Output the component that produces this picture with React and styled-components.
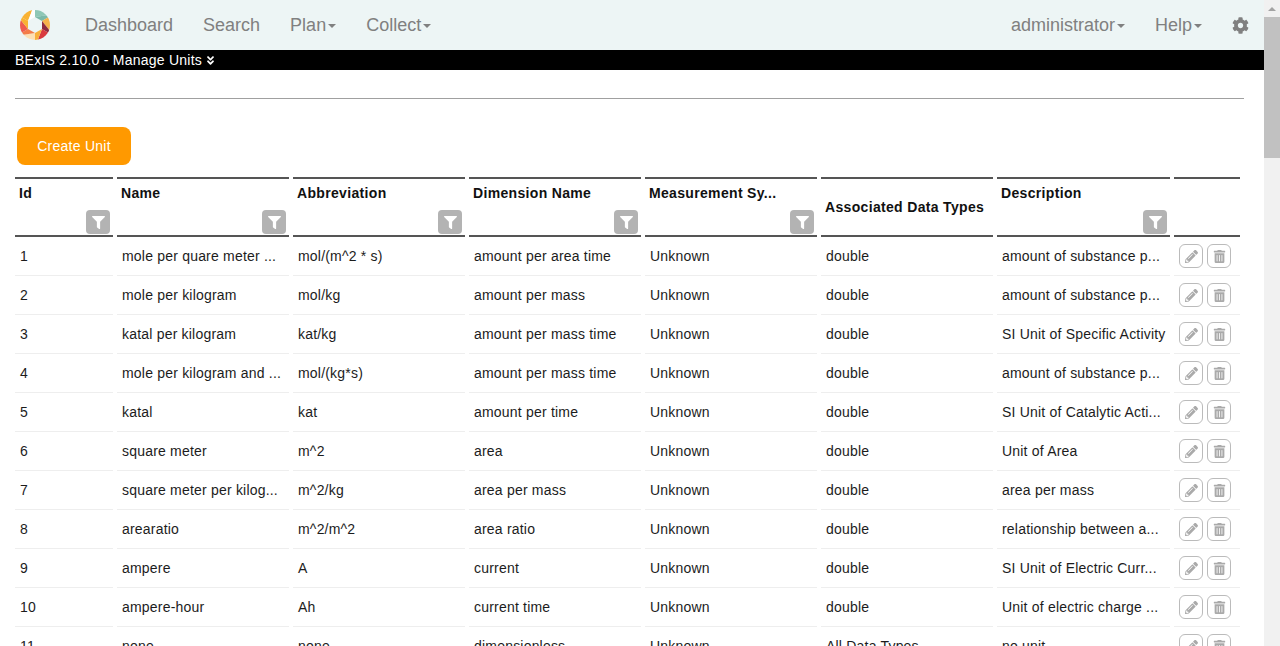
import React from "react";
import styled, { createGlobalStyle } from "styled-components";
import { FaAngleDoubleDown, FaCog, FaFilter, FaPencilAlt, FaTrashAlt } from "react-icons/fa";

const GlobalStyle = createGlobalStyle`
  body {
    margin: 0;
    background: #fff;
    font-family: "Liberation Sans", Arial, sans-serif;
    font-size: 14px;
    color: #222;
  }
`;

const COLUMNS = [
  { title: "Id", width: 98, filter: true },
  { title: "Name", width: 172, filter: true },
  { title: "Abbreviation", width: 172, filter: true },
  { title: "Dimension Name", width: 172, filter: true },
  { title: "Measurement Sy...", width: 172, filter: true },
  { title: "Associated Data Types", width: 172 },
  { title: "Description", width: 173, filter: true },
  { title: "", width: 66 },
];

const UNITS = [
  ["1", "mole per quare meter ...", "mol/(m^2 * s)", "amount per area time", "Unknown", "double", "amount of substance p..."],
  ["2", "mole per kilogram", "mol/kg", "amount per mass", "Unknown", "double", "amount of substance p..."],
  ["3", "katal per kilogram", "kat/kg", "amount per mass time", "Unknown", "double", "SI Unit of Specific Activity"],
  ["4", "mole per kilogram and ...", "mol/(kg*s)", "amount per mass time", "Unknown", "double", "amount of substance p..."],
  ["5", "katal", "kat", "amount per time", "Unknown", "double", "SI Unit of Catalytic Acti..."],
  ["6", "square meter", "m^2", "area", "Unknown", "double", "Unit of Area"],
  ["7", "square meter per kilog...", "m^2/kg", "area per mass", "Unknown", "double", "area per mass"],
  ["8", "arearatio", "m^2/m^2", "area ratio", "Unknown", "double", "relationship between a..."],
  ["9", "ampere", "A", "current", "Unknown", "double", "SI Unit of Electric Curr..."],
  ["10", "ampere-hour", "Ah", "current time", "Unknown", "double", "Unit of electric charge ..."],
  ["11", "none", "none", "dimensionless", "Unknown", "All Data Types", "no unit"],
];

const LOGO_PIECES = [
  ["16,8 16,-6 35,5", "#8fc7b5"],
  ["16,8 35,5 23,12", "#7cb9a8"],
  ["23,12 35,5 35,27", "#f6b24a"],
  ["23,12 35,27 23,20", "#8e2b3f"],
  ["23,20 35,27 16,38", "#d93a3f"],
  ["23,20 16,38 16,24", "#f8b03c"],
  ["16,24 16,38 -3,27", "#fde0b4"],
  ["16,24 -3,27 9,20", "#f47c48"],
  ["9,20 -3,27 -3,5", "#ee5b4f"],
  ["9,20 -3,5 9,12", "#f9b233"],
  ["9,12 -3,5 16,-6", "#f9b233"],
  ["9,12 16,-6 16,8", "#ffffff"],
];

const Logo = () => (
  <LogoMark viewBox="0 0 32 32">
    <defs>
      <clipPath id="logo-circle">
        <circle cx="16" cy="16" r="15" />
      </clipPath>
    </defs>
    <g clipPath="url(#logo-circle)">
      {LOGO_PIECES.map(([points, fill]) => (
        <polygon key={points} points={points} fill={fill} />
      ))}
    </g>
  </LogoMark>
);

const App = () => {
  return (
    <Shell>
      <GlobalStyle />
      <Page>
        <Navbar>
          <Logo />
          <NavGroup>
            <NavItem>Dashboard</NavItem>
            <NavItem>Search</NavItem>
            <NavItem>
              Plan
              <Caret />
            </NavItem>
            <NavItem>
              Collect
              <Caret />
            </NavItem>
          </NavGroup>
          <NavGroupRight>
            <NavItem>
              administrator
              <Caret />
            </NavItem>
            <NavItem>
              Help
              <Caret />
            </NavItem>
            <NavItem>
              <FaCog size={17} />
            </NavItem>
          </NavGroupRight>
        </Navbar>
        <TitleBar>
          BExIS 2.10.0 - Manage Units
          <FaAngleDoubleDown size={11} />
        </TitleBar>
        <Content>
          <Rule />
          <CreateButton>Create Unit</CreateButton>
          <UnitTable>
            <colgroup>
              {COLUMNS.map((col, i) => (
                <col key={i} width={col.width} />
              ))}
            </colgroup>
            <thead>
              <tr>
                {COLUMNS.map((col, i) => (
                  <HeadCell key={i}>
                    {col.filter ? (
                      <HeadStack>
                        <HeadTitle>{col.title}</HeadTitle>
                        <FilterButton>
                          <FaFilter size={13} />
                        </FilterButton>
                      </HeadStack>
                    ) : (
                      <HeadTitle>{col.title}</HeadTitle>
                    )}
                  </HeadCell>
                ))}
              </tr>
            </thead>
            <tbody>
              {UNITS.map((unit) => (
                <tr key={unit[0]}>
                  {unit.map((value, i) => (
                    <BodyCell key={i}>{value}</BodyCell>
                  ))}
                  <BodyCell>
                    <Actions>
                      <ActionButton>
                        <FaPencilAlt size={13} />
                      </ActionButton>
                      <ActionButton>
                        <FaTrashAlt size={13} />
                      </ActionButton>
                    </Actions>
                  </BodyCell>
                </tr>
              ))}
            </tbody>
          </UnitTable>
        </Content>
      </Page>
      <ScrollTrack>
        <ScrollArrow />
        <ScrollThumb />
      </ScrollTrack>
    </Shell>
  );
};
export default App;

const Shell = styled.div`
  display: flex;
  height: 100vh;
  overflow: hidden;
`;

const Page = styled.div`
  flex: 1;
  min-width: 0;
`;

const ScrollTrack = styled.div`
  display: flex;
  flex-direction: column;
  flex: none;
  width: 16px;
  background-color: #f1f1f1;
`;

const ScrollArrow = styled.div`
  display: flex;
  align-items: center;
  justify-content: center;
  flex: none;
  height: 17px;
  &::before {
    content: "";
    width: 0;
    height: 0;
    border-left: 4px solid transparent;
    border-right: 4px solid transparent;
    border-bottom: 4px solid #a3a3a3;
  }
`;

const ScrollThumb = styled.div`
  flex: none;
  height: 141px;
  background-color: #c1c1c1;
`;

const Navbar = styled.nav`
  display: flex;
  align-items: center;
  height: 50px;
  padding: 0 0 0 19px;
  background-color: #edf5f5;
`;

const LogoMark = styled.svg`
  width: 32px;
  height: 32px;
  flex: none;
  margin-right: 19px;
`;

const NavGroup = styled.div`
  display: flex;
  align-items: center;
`;

const NavGroupRight = styled(NavGroup)`
  margin-left: auto;
`;

const NavItem = styled.a`
  display: flex;
  align-items: center;
  padding: 0 15px;
  font-size: 18px;
  line-height: 50px;
  color: #808080;
`;

const Caret = styled.span`
  width: 0;
  height: 0;
  margin-left: 2px;
  margin-top: 1px;
  border-top: 4px solid #808080;
  border-left: 4px solid transparent;
  border-right: 4px solid transparent;
`;

const TitleBar = styled.div`
  display: flex;
  align-items: center;
  gap: 3px;
  height: 20px;
  padding-left: 15px;
  background-color: #000;
  color: #fff;
  font-size: 14px;
  letter-spacing: 0.24px;
`;

const Content = styled.main`
  padding: 28px 20px 0 15px;
`;

const Rule = styled.hr`
  height: 1px;
  margin: 0 0 28px;
  border: none;
  background-color: #a0a0a0;
`;

const CreateButton = styled.button`
  display: block;
  width: 114px;
  height: 38px;
  margin: 0 0 12px 2px;
  border: none;
  border-radius: 8px;
  background-color: #ff9900;
  color: #fff;
  font-family: inherit;
  font-size: 14px;
  letter-spacing: 0.25px;
`;

const UnitTable = styled.table`
  width: 1233px;
  margin-left: -4px;
  table-layout: fixed;
  border-collapse: separate;
  border-spacing: 4px 0;
`;

const HeadCell = styled.th`
  height: 56px;
  padding: 0 3px 0 4px;
  border-top: 2px solid #555;
  border-bottom: 2px solid #555;
  text-align: left;
  vertical-align: middle;
`;

const HeadStack = styled.div`
  display: flex;
  flex-direction: column;
  justify-content: space-between;
  height: 54px;
  padding-top: 5px;
  box-sizing: border-box;
`;

const HeadTitle = styled.span`
  font-size: 14px;
  font-weight: 700;
  line-height: 16px;
  letter-spacing: 0.33px;
  color: #111;
  white-space: nowrap;
`;

const FilterButton = styled.span`
  display: flex;
  align-items: center;
  justify-content: center;
  align-self: flex-end;
  width: 24px;
  height: 24px;
  border-radius: 4px;
  background-color: #b3b3b3;
  color: #fff;
`;

const BodyCell = styled.td`
  height: 38px;
  padding: 0 0 0 5px;
  border-bottom: 1px solid #eee;
  font-size: 14px;
  letter-spacing: 0.2px;
  color: #1c1c1c;
  white-space: nowrap;
  overflow: hidden;
`;

const Actions = styled.div`
  display: flex;
  gap: 4px;
`;

const ActionButton = styled.span`
  display: flex;
  align-items: center;
  justify-content: center;
  box-sizing: border-box;
  width: 24px;
  height: 24px;
  border: 1px solid #bbb;
  border-radius: 6px;
  color: #aaa;
`;
